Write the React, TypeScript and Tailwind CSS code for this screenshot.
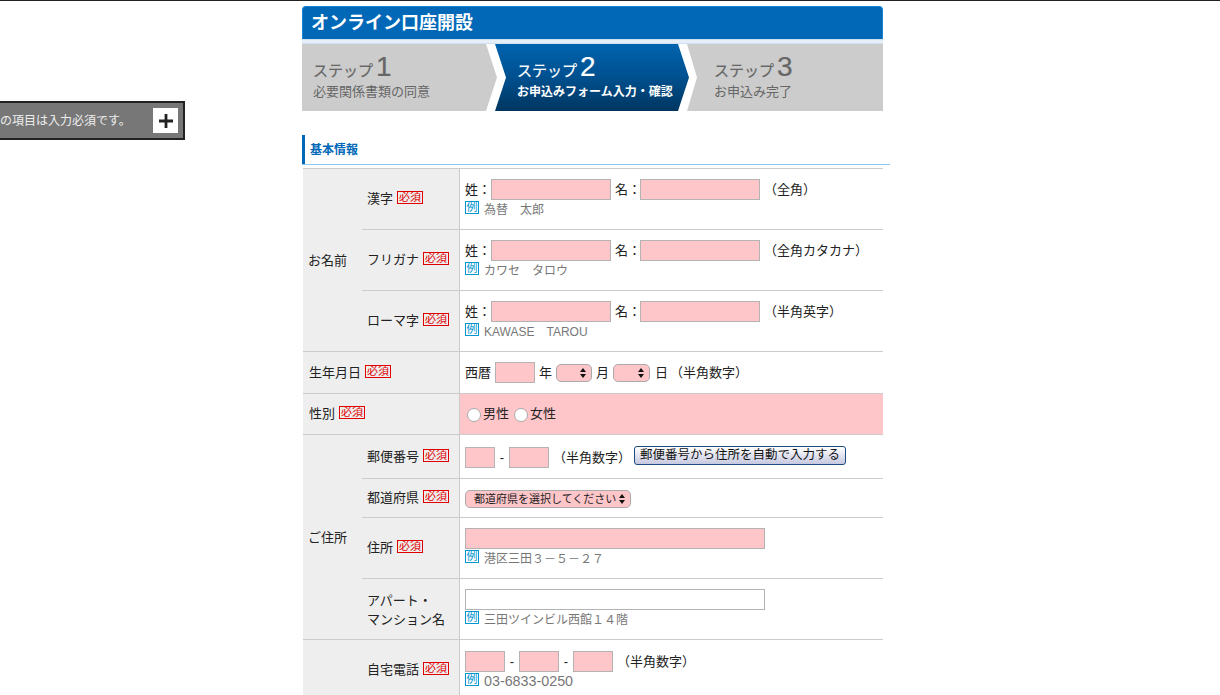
const inputPink = "h-[21px] border border-[#b3b3b3] bg-[#ffc6ca] outline-none";

const Required = () => (
  <span className="relative -top-[2px] ml-[4px] inline-flex h-[13px] w-[26px] items-center justify-center border border-[#e00000] text-[11px] leading-none text-[#e00000]">
    必須
  </span>
);

const Example = ({ text, textClass = "mt-[3px] text-[12px]" }: { text: string; textClass?: string }) => (
  <div className="mt-px flex h-[13px] items-start leading-none text-[#777]">
    <span className="mr-[5px] flex h-[13px] w-[14px] items-center justify-center border border-[#0096d0] text-[11px] leading-none text-[#0096d0]">
      例
    </span>
    <span className={`whitespace-nowrap ${textClass}`}>{text}</span>
  </div>
);

const ArrowSelect = ({ className, label }: { className: string; label?: string }) => (
  <span className={`relative inline-flex items-center rounded-[5px] border border-[#aaa] bg-[#ffc6ca] ${className}`}>
    {label && <span className="pl-2 text-[11px] leading-none text-[#222]">{label}</span>}
    <svg className="absolute right-[5px] top-1/2 -translate-y-1/2" width="6" height="10" viewBox="0 0 6 10">
      <path d="M3 0 L6 4 H0 Z M0 6 H6 L3 10 Z" fill="#111" />
    </svg>
  </span>
);

const NameInputs = ({ note, example }: { note: string; example: string }) => (
  <>
    <div className="flex items-center">
      <span className="w-[26px]">姓：</span>
      <input className={`${inputPink} w-[120px]`} />
      <span className="ml-1 w-[25px]">名：</span>
      <input className={`${inputPink} w-[120px]`} />
      <span className="ml-[4px]">（{note}）</span>
    </div>
    <Example text={example} />
  </>
);

const labelCell = "border-t border-[#ccc] bg-[#eee] text-[#222]";
const valueCell = "border-t border-l border-[#ccc] bg-white pl-[5px] align-top text-[#222]";

const steps = [
  { word: "ステップ", num: "1", sub: "必要関係書類の同意" },
  { word: "ステップ", num: "2", sub: "お申込みフォーム入力・確認" },
  { word: "ステップ", num: "3", sub: "お申込み完了" },
];

const StepText = ({ word, num, sub, bold }: { word: string; num: string; sub: string; bold?: boolean }) => (
  <>
    <div className="flex h-[28px] items-end leading-none">
      <span className="mb-[3px] text-[15px] [-webkit-text-stroke:0.2px]">{word}</span>
      <span className="ml-[3px] text-[28px] leading-[28px] [-webkit-text-stroke:0.2px]">{num}</span>
    </div>
    <div className={`mt-[3px] whitespace-nowrap leading-[16px] ${bold ? "text-[12px] font-bold" : "text-[13px]"}`}>{sub}</div>
  </>
);

const App = () => {
  return (
    <div className="relative h-[695px] overflow-hidden border-t border-[#222] bg-white font-['Liberation_Sans','Noto_Sans_CJK_JP',sans-serif] text-[13px]">
      {/* floating notice */}
      <div className="absolute left-0 top-[100px] flex h-[39px] w-[185px] items-center justify-between border-y-2 border-r-2 border-[#222] bg-[#777] pr-[5px] text-[12px] text-[#eee]">
        <span>の項目は入力必須です。</span>
        <span className="flex h-[25px] w-[25px] items-center justify-center bg-white">
          <svg width="16" height="16" viewBox="0 0 16 16">
            <path d="M8 1 V15 M1 8 H15" stroke="#222" strokeWidth="2.8" />
          </svg>
        </span>
      </div>

      <div className="ml-[302px] w-[581px] pt-[5px]">
        <div className="flex h-[33px] items-center rounded-t-[4px] border-x border-t border-[#1a84cc] bg-[#0068b7] pl-2 text-[18px] font-bold leading-none text-white">
          オンライン口座開設
        </div>
        <div className="h-[5px] border-y border-[#cfe0f2] bg-[#e6eef8]" />

        {/* steps */}
        <div className="flex h-[67px]">
          <div className="flex w-[195px] flex-col bg-[#ccc] pl-[11px] pt-[9px] text-[#666] [clip-path:polygon(0_0,184px_0,195px_50%,184px_100%,0_100%)]">
            <StepText {...steps[0]} />
          </div>
          <div className="-ml-[2px] flex w-[194px] flex-col bg-linear-to-b from-[#0063ae] via-[#00508f] to-[#003660] pl-[22px] pt-[9px] text-white [clip-path:polygon(0_0,183px_0,194px_50%,183px_100%,0_100%,11px_50%)]">
            <StepText {...steps[1]} bold />
          </div>
          <div className="-ml-[2px] flex w-[196px] flex-col bg-[#ccc] pl-[27px] pt-[9px] text-[#666] [clip-path:polygon(0_0,100%_0,100%_100%,0_100%,10px_50%)]">
            <StepText {...steps[2]} />
          </div>
        </div>

        {/* section heading */}
        <div className="mt-6 flex h-[30px] w-[588px] items-center border-b border-[#8ccbf0]">
          <span className="flex h-full items-center border-l-[3px] border-[#0068b7] pl-[5px] text-[12px] font-bold text-[#0068b7]">
            基本情報
          </span>
        </div>

        <table className="ml-px mt-[3px] w-[580px] table-fixed border-separate border-spacing-0 text-[13px] leading-[16px]">
          <colgroup>
            <col className="w-[59px]" />
            <col className="w-[97px]" />
            <col />
          </colgroup>
          <tbody>
            <tr className="h-[61px]">
              <td rowSpan={3} className={`${labelCell} pl-[5px] pt-[2px]`}>お名前</td>
              <td className={`${labelCell} pl-[5px]`}>漢字<Required /></td>
              <td className={`${valueCell} pt-[10px]`}><NameInputs note="全角" example="為替　太郎" /></td>
            </tr>
            <tr className="h-[61px]">
              <td className={`${labelCell} pl-[5px]`}>フリガナ<Required /></td>
              <td className={`${valueCell} pt-[10px]`}><NameInputs note="全角カタカナ" example="カワセ　タロウ" /></td>
            </tr>
            <tr className="h-[61px]">
              <td className={`${labelCell} pl-[5px]`}>ローマ字<Required /></td>
              <td className={`${valueCell} pt-[10px]`}><NameInputs note="半角英字" example="KAWASE　TAROU" /></td>
            </tr>
            <tr className="h-[42px]">
              <td colSpan={2} className={`${labelCell} pl-[6px]`}>生年月日<Required /></td>
              <td className={`${valueCell} !align-middle`}>
                <div className="flex items-center">
                  <span>西暦</span>
                  <input className={`${inputPink} ml-[4px] w-[40px]`} />
                  <span className="ml-1">年</span>
                  <ArrowSelect className="ml-[4px] h-[18px] w-[36px]" />
                  <span className="ml-1">月</span>
                  <ArrowSelect className="ml-[4px] h-[18px] w-[37px]" />
                  <span className="ml-[5px]">日</span>
                  <span className="ml-[2px]">（半角数字）</span>
                </div>
              </td>
            </tr>
            <tr className="h-[41px]">
              <td colSpan={2} className={`${labelCell} pl-[6px]`}>性別<Required /></td>
              <td className="border-l border-t border-[#ccc] bg-[#ffc6ca] pl-[7px] pt-[4px] text-[#222]">
                <label className="inline-flex items-center">
                  <input type="radio" name="sex" className="mr-[2px] mt-[2px] h-[14px] w-[14px] appearance-none rounded-full border border-[#aaa] bg-white" />
                  男性
                </label>
                <label className="ml-[5px] inline-flex items-center">
                  <input type="radio" name="sex" className="mr-[2px] mt-[2px] h-[14px] w-[14px] appearance-none rounded-full border border-[#aaa] bg-white" />
                  女性
                </label>
              </td>
            </tr>
            <tr className="h-[44px]">
              <td rowSpan={4} className={`${labelCell} pl-[5px] pt-[2px]`}>ご住所</td>
              <td className={`${labelCell} pl-[5px]`}>郵便番号<Required /></td>
              <td className={`${valueCell} !align-middle`}>
                <div className="flex translate-y-[1px] items-center">
                  <input className={`${inputPink} w-[30px]`} />
                  <span className="w-[14px] text-center">-</span>
                  <input className={`${inputPink} w-[40px]`} />
                  <span className="ml-[4px]">（半角数字）</span>
                  <button className="-mt-[5px] ml-[3px] h-[19px] w-[212px] rounded-[3px] border border-[#1d4a7f] bg-linear-to-b from-white to-[#c6c8e0] text-[12.5px] leading-none text-[#111]">
                    郵便番号から住所を自動で入力する
                  </button>
                </div>
              </td>
            </tr>
            <tr className="h-[39px]">
              <td className={`${labelCell} pl-[5px]`}>都道府県<Required /></td>
              <td className={`${valueCell} !align-middle`}>
                <ArrowSelect className="h-[18px] w-[166px] translate-y-[1px]" label="都道府県を選択してください" />
              </td>
            </tr>
            <tr className="h-[61px]">
              <td className={`${labelCell} pl-[5px]`}>住所<Required /></td>
              <td className={`${valueCell} pt-[10px]`}>
                <input className={`${inputPink} block w-[300px]`} />
                <Example text="港区三田３－５－２７" />
              </td>
            </tr>
            <tr className="h-[61px]">
              <td className={`${labelCell} pl-[5px] pt-[2px] leading-[19px]`}>アパート・<br />マンション名</td>
              <td className={`${valueCell} pt-[10px]`}>
                <input className="block h-[21px] w-[300px] border border-[#b3b3b3] bg-white outline-none" />
                <Example text="三田ツインビル西館１４階" />
              </td>
            </tr>
            <tr className="h-[61px]">
              <td className={labelCell} />
              <td className={`${labelCell} pl-[5px]`}>自宅電話<Required /></td>
              <td className={`${valueCell} pt-[11px]`}>
                <div className="flex items-center">
                  <input className={`${inputPink} w-[40px]`} />
                  <span className="w-[14px] text-center">-</span>
                  <input className={`${inputPink} w-[40px]`} />
                  <span className="w-[14px] text-center">-</span>
                  <input className={`${inputPink} w-[40px]`} />
                  <span className="ml-[4px]">（半角数字）</span>
                </div>
                <Example text="03-6833-0250" textClass="mt-px text-[14.3px]" />
              </td>
            </tr>
          </tbody>
        </table>
      </div>
    </div>
  );
};

export default App;
